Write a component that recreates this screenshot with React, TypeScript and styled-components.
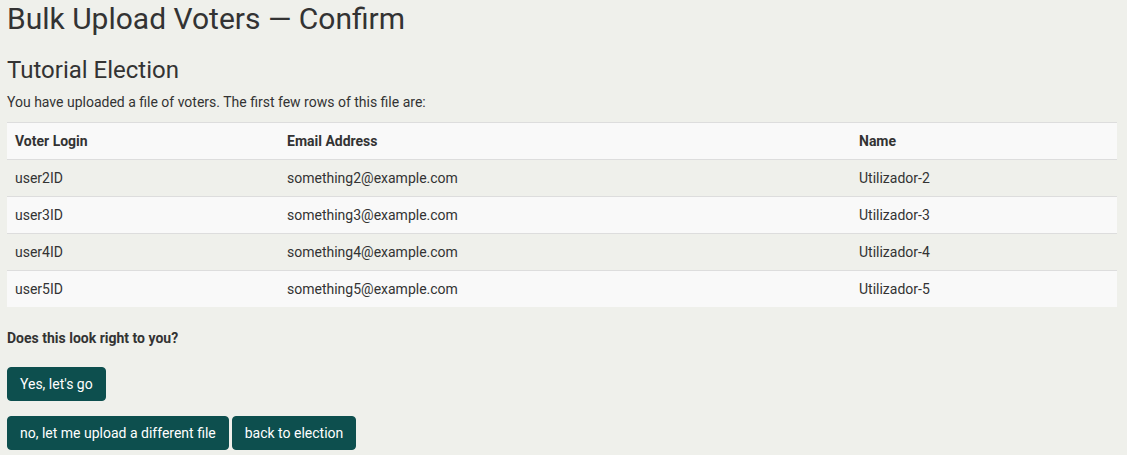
import React from "react";
import styled, { createGlobalStyle } from "styled-components";

const Global = createGlobalStyle`
  html, body { margin: 0; padding: 0; background: #eff0eb; }
  body {
    font-family: Roboto, "Liberation Sans", Arial, sans-serif;
    font-size: 14px;
    line-height: 20px;
    color: #333;
  }
`;

const Page = styled.main`
  padding: 1px 10px 0 7px;
`;

const Title = styled.h1`
  margin: 0;
  font-size: 30px;
  font-weight: 400;
  line-height: 1.2;
  color: #333;
`;

const Subtitle = styled.h2`
  margin: 19px 0 0;
  font-size: 24px;
  font-weight: 400;
  line-height: 1.2;
  color: #333;
`;

const Intro = styled.p`
  margin: 7px 0 10px;
`;

const Table = styled.table`
  width: 100%;
  border-collapse: collapse;
  border-spacing: 0;
`;

const Row = styled.tr<{ $striped?: boolean }>`
  background: ${(p) => (p.$striped ? "#f9f9f9" : "transparent")};
`;

const Head = styled.th<{ $w?: number }>`
  text-align: left;
  font-weight: 700;
  padding: 8px;
  width: ${(p) => (p.$w ? `${p.$w}px` : "auto")};
  border-top: 1px solid #dddddd;
  border-bottom: 1px solid #dddddd;
`;

const Cell = styled.td`
  padding: 8px;
  border-top: 1px solid #dddddd;
`;

const Question = styled.p`
  margin: 21px 0 19px;
  font-weight: 700;
`;

const ButtonRow = styled.div<{ $gap?: number }>`
  display: flex;
  gap: 3px;
  margin-bottom: ${(p) => p.$gap ?? 0}px;
`;

const Button = styled.button`
  font-family: inherit;
  font-size: 14px;
  line-height: 20px;
  padding: 6px 12px;
  border: 1px solid #0d4f4e;
  border-radius: 4px;
  background: #0d4f4e;
  color: #fff;
  cursor: pointer;
`;

const rows = [
  ["user2ID", "something2@example.com", "Utilizador-2"],
  ["user3ID", "something3@example.com", "Utilizador-3"],
  ["user4ID", "something4@example.com", "Utilizador-4"],
  ["user5ID", "something5@example.com", "Utilizador-5"],
];

export default function App() {
  return (
    <Page>
      <Global />
      <Title>Bulk Upload Voters — Confirm</Title>
      <Subtitle>Tutorial Election</Subtitle>
      <Intro>You have uploaded a file of voters. The first few rows of this file are:</Intro>
      <Table>
        <thead>
          <Row $striped>
            <Head $w={256}>Voter Login</Head>
            <Head $w={556}>Email Address</Head>
            <Head>Name</Head>
          </Row>
        </thead>
        <tbody>
          {rows.map((r, i) => (
            <Row key={r[0]} $striped={i % 2 === 1}>
              {r.map((c) => (
                <Cell key={c}>{c}</Cell>
              ))}
            </Row>
          ))}
        </tbody>
      </Table>
      <Question>Does this look right to you?</Question>
      <ButtonRow $gap={15}>
        <Button>Yes, let's go</Button>
      </ButtonRow>
      <ButtonRow>
        <Button>no, let me upload a different file</Button>
        <Button>back to election</Button>
      </ButtonRow>
    </Page>
  );
}
